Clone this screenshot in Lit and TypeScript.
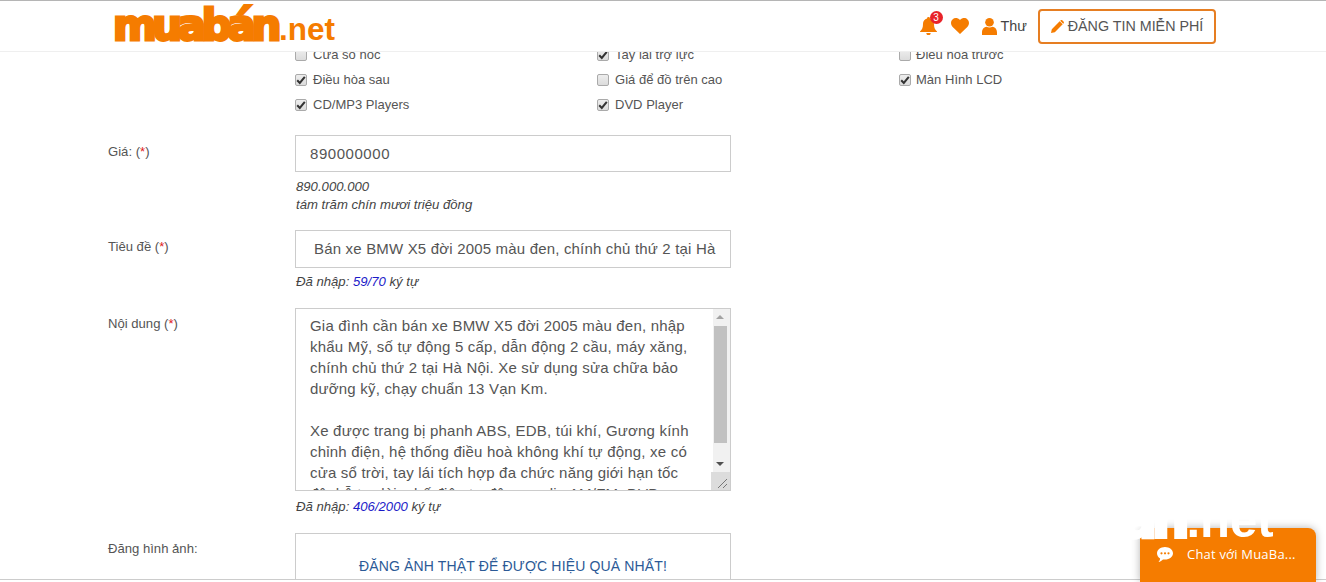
import { LitElement, html, css, svg } from "lit";
import { customElement } from "lit/decorators.js";

const checks: [string, boolean][][] = [
  [["Cửa sổ nóc", false], ["Tay lái trợ lực", true], ["Điều hòa trước", false]],
  [["Điều hòa sau", true], ["Giá để đồ trên cao", false], ["Màn Hình LCD", true]],
  [["CD/MP3 Players", true], ["DVD Player", true]],
];

const body = [
  "Gia đình cần bán xe BMW X5 đời 2005 màu đen, nhập",
  "khẩu Mỹ, số tự động 5 cấp, dẫn động 2 cầu, máy xăng,",
  "chính chủ thứ 2 tại Hà Nội. Xe sử dụng sửa chữa bảo",
  "dưỡng kỹ, chạy chuẩn 13 Vạn Km.",
  "\u00a0",
  "Xe được trang bị phanh ABS, EDB, túi khí, Gương kính",
  "chỉnh điện, hệ thống điều hoà không khí tự động, xe có",
  "cửa sổ trời, tay lái tích hợp đa chức năng giới hạn tốc",
  "độ, hỗ trợ lùi, ghế điện tự động, radio AM/FM, DVD",
];

@customElement("app-root")
export class AppRoot extends LitElement {
  static styles = css`
    :host { display: block; width: 1326px; height: 582px; position: relative; overflow: hidden; background: #fff;
      font-family: "Liberation Sans", Arial, sans-serif; color: #555; font-size: 13px; }
    .page { height: 579px; overflow: hidden; border-bottom: 1px solid #ccc; }
    .main { padding: 42px 0 0 108px; }
    .header { position: absolute; left: 0; top: 0; width: 1326px; height: 50px; background: #fff; border-top: 1px solid #b5b5b5;
      border-bottom: 1px solid #efefef; display: flex; align-items: center; }
    .logo { margin-left: 113px; color: #f57c00; display: flex; align-items: baseline; white-space: nowrap; line-height: 50px; height: 50px; }
    .logo b { font: 700 42px/50px "DejaVu Sans", sans-serif; letter-spacing: -4.4px; -webkit-text-stroke: 3px #f57c00; }
    .logo span { font: 700 31.5px/50px "Liberation Sans", sans-serif; margin-left: 2px; }
    .nav { margin-left: auto; margin-right: 110px; display: flex; align-items: center; }
    .bell { position: relative; width: 17px; height: 18px; margin-right: 14px; }
    .bell svg, .heart, .user { display: block; fill: #f57c00; }
    .badge { position: absolute; left: 10px; top: -6px; width: 13px; height: 13px; border-radius: 50%; background: #e8232a; color: #fff;
      font-size: 10px; line-height: 13px; text-align: center; }
    .heart { margin-right: 13px; }
    .user { margin-right: 4px; }
    .thu { font-size: 14.4px; color: #444; margin-right: 11px; }
    .post { box-sizing: border-box; width: 178px; height: 35px; border: 2px solid #e67e22; border-radius: 4px; display: flex; align-items: center;
      justify-content: center; gap: 4px; font-size: 14.3px; color: #555; white-space: nowrap; }
    .post svg { fill: #f57c00; }
    .checks { margin-left: 187px; display: grid; grid-template-columns: repeat(3, 302px); grid-auto-rows: 25px; align-items: center; }
    .check { display: flex; align-items: center; gap: 6px; white-space: nowrap; font-size: 13px; color: #555; letter-spacing: .02px; }
    .check:nth-child(3n) { gap: 5px; }
    .box { width: 12px; height: 12px; box-sizing: border-box; border: 1px solid #aaa; border-radius: 2px; background: linear-gradient(#ededed, #dcdcdc); display: flex; align-items: center; justify-content: center; }
    .box svg { display: block; }
    .row { display: grid; grid-template-columns: 187px 436px; }
    .label { font-size: 13.1px; color: #555; padding-top: 9px; line-height: 15px; }
    .req i { color: #e02020; font-style: normal; }
    .input { box-sizing: border-box; border: 1px solid #ccc; font-size: 15px; color: #555; display: flex; align-items: center; white-space: nowrap; overflow: hidden; }
    .input span { overflow: hidden; flex: 1; }
    .price { height: 37px; padding-left: 14px; letter-spacing: .55px; }
    .title { height: 38px; padding: 0 14px 1px 18px; letter-spacing: .18px; }
    .hint { font-size: 13.15px; font-style: italic; color: #444; line-height: 18px; padding-left: 1px; margin-top: 5px; }
    .hint em { color: #1a1ac8; }
    .hint.h1 { margin-top: 6px; }
    .hint.h3 { margin-top: 7px; }
    .r1 { margin-top: 18px; }
    .r2 { margin-top: 16px; }
    .r3 { margin-top: 17px; }
    .r4 { margin-top: 17px; }
    .nd { padding-top: 8px; }
    .area { box-sizing: border-box; height: 183px; border: 1px solid #ccc; position: relative; overflow: hidden; padding: 6px 0 0 14px; font-size: 15px; line-height: 21px; color: #555; white-space: nowrap; letter-spacing: .2px; }
    .bar { position: absolute; right: 0; top: 0; bottom: 0; width: 17px; background: #f1f1f1; }
    .thumb { position: absolute; left: 1px; right: 3px; top: 17px; height: 117px; background: #c1c1c1; }
    .up, .down { position: absolute; left: 3px; width: 0; height: 0; border-left: 4px solid transparent; border-right: 4px solid transparent; }
    .up { top: 6px; border-bottom: 4px solid #a3a3a3; }
    .down { bottom: 24px; border-top: 4px solid #505050; }
    .grip { position: absolute; right: 0; bottom: 0; width: 19px; height: 18px; background: #dcdcdc; }
    .grip svg { display: block; }
    .upload { box-sizing: border-box; height: 60px; border: 1px solid #ccc; display: flex; justify-content: center; padding-top: 24px; color: #2c5a96; font-size: 14px; letter-spacing: .15px; white-space: nowrap; }
    .upl { padding-top: 8px; }
    .wm { position: absolute; left: 1121px; top: 489px; color: #fff; display: flex; align-items: baseline; white-space: nowrap; z-index: 3; height: 60px; }
    .wm b { font: 700 53px/60px "DejaVu Sans", sans-serif; letter-spacing: -5px; -webkit-text-stroke: 3.5px #fff; }
    .wm span { font: 700 49px/60px "Liberation Sans", sans-serif; margin-left: 2px; }
    .chat { position: absolute; left: 1140px; top: 528px; width: 176px; height: 54px; background: #f57c00; border-radius: 8px 8px 0 0; box-shadow: 0 0 8px rgba(0,0,0,.3);
      color: #fff; display: flex; align-items: center; font-size: 13px; padding: 0 0 2px 17px; box-sizing: border-box; gap: 14px; letter-spacing: .2px; font-family: "Open Sans", sans-serif; z-index: 2; }
    .chat svg { fill: #fff; display: block; }
  `;

  private tick() {
    return svg`<svg width="10" height="10" viewBox="0 0 10 10"><path d="M1.2 5.2 L3.8 8 L8.8 1.8" fill="none" stroke="#333" stroke-width="2"/></svg>`;
  }

  render() {
    return html`
      <div class="page">
        <div class="main">
          <div class="checks">
            ${checks.flat().map(([t, on]) => html`<div class="check"><span class="box">${on ? this.tick() : ""}</span>${t}</div>`)}
          </div>
          <div class="row r1">
            <div class="label req">Giá: (<i>*</i>)</div>
            <div>
              <div class="input price">890000000</div>
              <div class="hint h1">890.000.000<br />tám trăm chín mươi triệu đồng</div>
            </div>
          </div>
          <div class="row r2">
            <div class="label req">Tiêu đề (<i>*</i>)</div>
            <div>
              <div class="input title"><span>Bán xe BMW X5 đời 2005 màu đen, chính chủ thứ 2 tại Hà Nội</span></div>
              <div class="hint">Đã nhập: <em>59/70</em> ký tự</div>
            </div>
          </div>
          <div class="row r3">
            <div class="label req nd">Nội dung (<i>*</i>)</div>
            <div>
              <div class="area">
                ${body.map((l) => html`<div>${l}</div>`)}
                <div class="bar">
                  <span class="up"></span><span class="thumb"></span><span class="down"></span>
                  <span class="grip"><svg width="19" height="18" viewBox="0 0 19 18"><path d="M7 16 L16 7 M12 16 L16 12" stroke="#777" fill="none"/></svg></span>
                </div>
              </div>
              <div class="hint h3">Đã nhập: <em>406/2000</em> ký tự</div>
            </div>
          </div>
          <div class="row r4">
            <div class="label upl">Đăng hình ảnh:</div>
            <div class="upload">ĐĂNG ẢNH THẬT ĐỂ ĐƯỢC HIỆU QUẢ NHẤT!</div>
          </div>
        </div>
      </div>

      <div class="header">
        <div class="logo"><b>muabán</b><span>.net</span></div>
        <div class="nav">
          <div class="bell">
            <svg width="17" height="18" viewBox="0 0 17 18"><path d="M8.5 0a1.4 1.4 0 0 1 1.4 1.6C12.6 2.2 14 4.3 14 7c0 4 .9 5.6 3 7.5V15H0v-.5C2.100 12.600 3 11 3 7c0-2.700 1.400-4.800 4.100-5.400A1.400 1.400 0 0 1 8.500 0zM6.300 16h4.400a2.200 2.200 0 0 1-4.400 0z"/></svg>
            <span class="badge">3</span>
          </div>
          <svg class="heart" width="18" height="16" viewBox="0 0 18 16"><path d="M9 16 1.700 8.900C-.5 6.700-.5 3.300 1.500 1.400 3.500-.5 6.700-.4 9 2.100c2.300-2.500 5.500-2.600 7.500-.7 2 1.900 2 5.300-.2 7.500z"/></svg>
          <svg class="user" width="15" height="17" viewBox="0 0 15 17"><circle cx="7.500" cy="4.300" r="4.300"/><path d="M0 17v-2.500C0 11 2.300 9 4.500 8.800c1.800 1 4.200 1 6 0C12.700 9 15 11 15 14.500V17z"/></svg>
          <span class="thu">Thư</span>
          <div class="post">
            <svg width="13" height="13" viewBox="0 0 13 13"><path d="M0 13l.8-3.800L8.700 1.300l3 3-7.900 7.900zM9.500.5c.6-.6 1.500-.6 2 0l1 1c.6.500.6 1.400 0 2l-.3.300-3-3z"/></svg>
            ĐĂNG TIN MIỄN PHÍ
          </div>
        </div>
      </div>

      <div class="chat">
        <svg width="16" height="15" viewBox="0 0 16 15"><path d="M8 0c4.400 0 8 2.800 8 6.300s-3.600 6.300-8 6.300c-.7 0-1.300-.1-2-.2C4.900 13.500 3.300 14.700 1.500 15c.9-1 1.500-2.100 1.600-3.500C1.200 10.300 0 8.400 0 6.300 0 2.800 3.600 0 8 0z"/><g fill="#f57c00"><circle cx="4.500" cy="6.300" r="1.100"/><circle cx="8" cy="6.300" r="1.100"/><circle cx="11.500" cy="6.300" r="1.100"/></g></svg>
        Chat với MuaBa...
      </div>
      <div class="wm"><b>án</b><span>.net</span></div>
    `;
  }
}
